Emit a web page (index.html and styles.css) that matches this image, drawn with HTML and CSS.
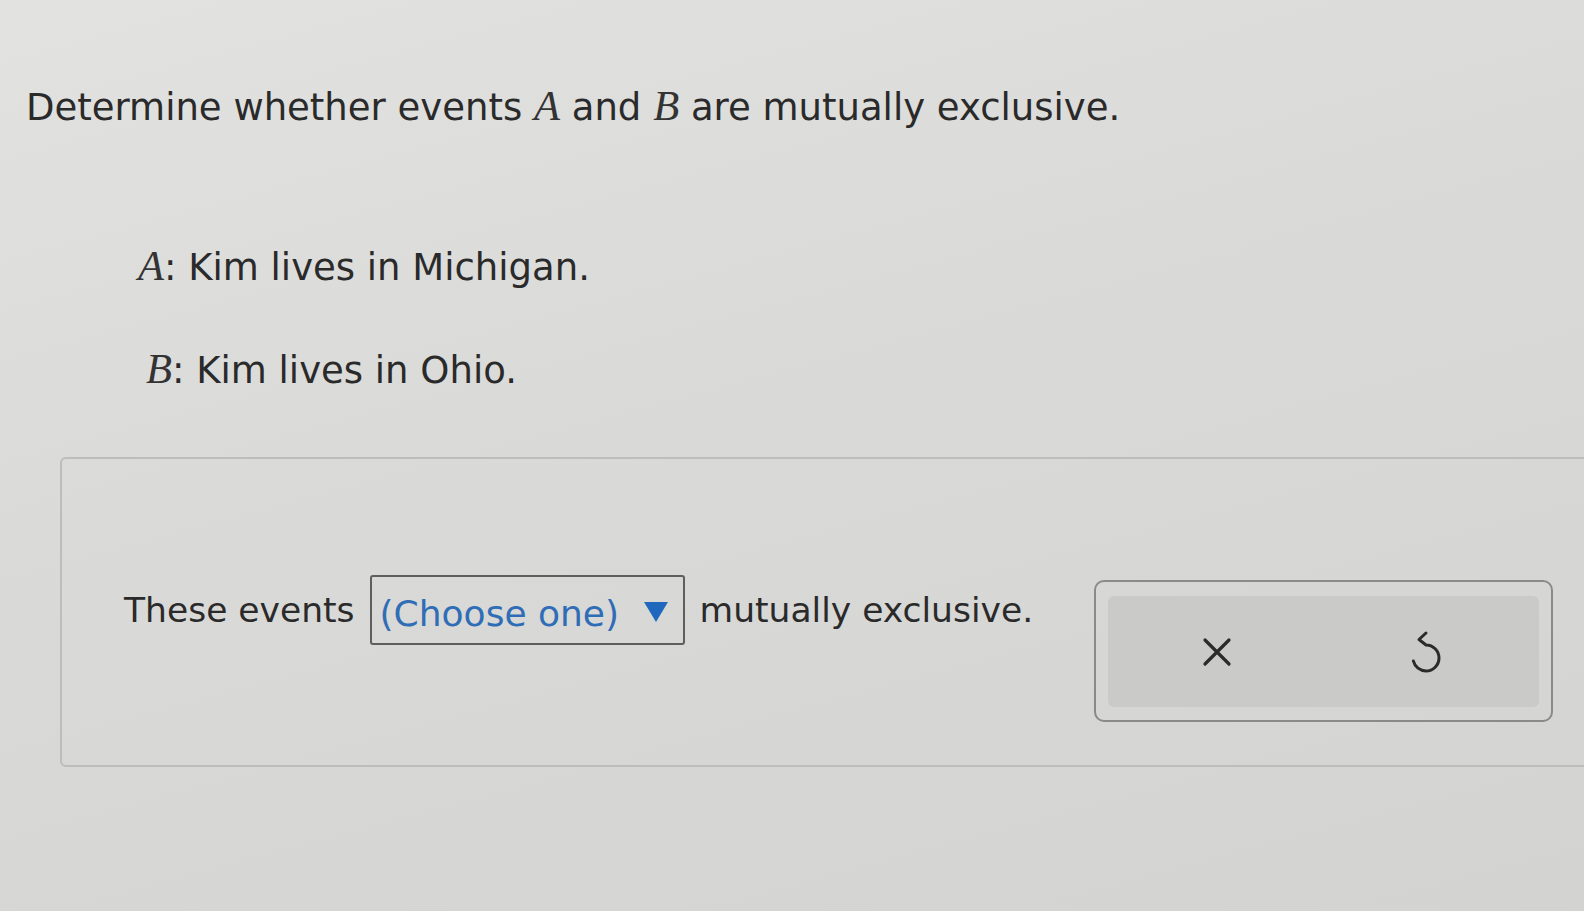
FILE: index.html
```html
<!DOCTYPE html>
<html>
<head>
<meta charset="utf-8">
<link rel="stylesheet" href="styles.css">
</head>
<body>
<div class="page">
  <p class="prompt">Determine whether events <i class="var">A</i> and <i class="var">B</i> are mutually exclusive.</p>
  <div class="events">
    <p class="event"><i class="var">A</i>: Kim lives in Michigan.</p>
    <p class="event ev-b"><i class="var">B</i>: Kim lives in Ohio.</p>
  </div>
  <div class="answer">
    <div class="sentence">
      <span>These events</span>
      <span class="select"><span class="choose">(Choose one)</span><svg class="caret" width="26" height="22" viewBox="0 0 26 22"><path d="M1 1 H25 L13 21 Z" fill="#1f68bd"/></svg></span>
      <span>mutually exclusive.</span>
    </div>
    <div class="tools">
      <div class="tools-inner">
        <svg class="icon icon-x" viewBox="0 0 32 32"><path d="M4 4 L28 28 M28 4 L4 28" stroke="#2b2b2b" stroke-width="3.2" stroke-linecap="round" fill="none"/></svg>
        <svg class="icon icon-undo" viewBox="0 0 36 44"><path d="M18 3 L11 9.5 L18 15 A13 13 0 0 1 18 41 A13 13 0 0 1 5.4 31" stroke="#2b2b2b" stroke-width="3" stroke-linecap="round" stroke-linejoin="round" fill="none"/></svg>
      </div>
    </div>
  </div>
</div>
</body>
</html>
```
FILE: styles.css
```css
html, body {
  margin: 0;
  padding: 0;
}
body {
  width: 1584px;
  height: 911px;
  overflow: hidden;
  background: linear-gradient(165deg, #e2e2e1 0%, #dadad9 40%, #d3d3d2 100%);
  font-family: "DejaVu Sans", Verdana, sans-serif;
  color: #2a2a2a;
}
.page {
  padding: 79px 0 0 26px;
}
.prompt {
  margin: 0;
  font-size: 37px;
  line-height: 54px;
}
.var {
  font-family: "Liberation Serif", "DejaVu Serif", serif;
  font-style: italic;
  font-size: 1.15em;
  color: #333;
}
.events {
  padding: 109px 0 0 112px;
}
.event {
  margin: 0;
  font-size: 37px;
  line-height: 44px;
}
.ev-b {
  margin-top: 57px;
  padding-left: 8px;
}
.answer {
  margin: 64px 0 0 34px;
  width: 1600px;
  height: 310px;
  border: 2px solid #bdbdbc;
  border-radius: 6px;
  display: flex;
  align-items: center;
  padding-left: 62px;
  box-sizing: border-box;
  gap: 61px;
}
.sentence {
  display: flex;
  align-items: center;
  gap: 15px;
  font-size: 34.5px;
  margin-bottom: 4px;
}
.select {
  display: inline-flex;
  align-items: center;
  width: 315px;
  height: 70px;
  box-sizing: border-box;
  border: 2px solid #5e5e5e;
  border-radius: 3px;
  padding: 6px 0 0 8px;
  gap: 24px;
  font-size: 36px;
}
.choose {
  color: #2f6db6;
}
.caret {
  display: block;
  margin-top: -2px;
}
.tools {
  width: 459px;
  height: 142px;
  box-sizing: border-box;
  border: 2px solid #8a8a8a;
  border-radius: 10px;
  padding: 14px 12px 13px 12px;
  margin-top: 78px;
  flex-shrink: 0;
}
.tools-inner {
  height: 100%;
  background: #cacac9;
  border-radius: 6px;
  display: flex;
  align-items: center;
  justify-content: space-between;
  padding: 0 95px 0 93px;
}
.icon {
  display: block;
  flex-shrink: 0;
}
.icon-x {
  width: 32px;
  height: 32px;
}
.icon-undo {
  width: 36px;
  height: 44px;
}
```
